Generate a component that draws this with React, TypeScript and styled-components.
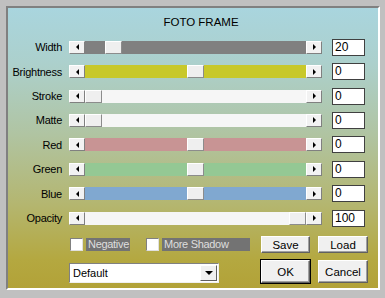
import React, { FC } from 'react';
import styled, { createGlobalStyle } from 'styled-components';

const GlobalStyle = createGlobalStyle`
  html, body {
    margin: 0;
    padding: 0;
    background: #c0c0c0;
  }
  body {
    font-family: 'Liberation Sans', Arial, sans-serif;
    font-size: 11px;
    color: #000;
  }
`;

interface ISlider {
  label: string;
  value: string;
  pos: number;
  track: string;
}

const sliders: ISlider[] = [
  { label: 'Width', value: '20', pos: 0.1, track: '#808080' },
  { label: 'Brightness', value: '0', pos: 0.5, track: '#c8c82a' },
  { label: 'Stroke', value: '0', pos: 0, track: '#f6f6f6' },
  { label: 'Matte', value: '0', pos: 0, track: '#f6f6f6' },
  { label: 'Red', value: '0', pos: 0.5, track: '#c89494' },
  { label: 'Green', value: '0', pos: 0.5, track: '#94c894' },
  { label: 'Blue', value: '0', pos: 0.5, track: '#80a8d0' },
  { label: 'Opacity', value: '100', pos: 1, track: '#f6f6f6' }
];

const Frame = styled.div`
  width: 385px;
  height: 298px;
  box-sizing: border-box;
  padding: 6px 5px 8px 6px;
  background: #c0c0c0;
`;

const Panel = styled.div`
  height: 100%;
  box-sizing: border-box;
  border-top: 2px solid #808080;
  border-left: 2px solid #808080;
  border-right: 2px solid #ffffff;
  border-bottom: 2px solid #ffffff;
  background: linear-gradient(to bottom, #a9d5de 0%, #acd0cc 20%, #b0c4a2 45%, #b4b670 70%, #b4a840 90%, #b2a238 100%);
  display: flex;
  flex-direction: column;
`;

const Title = styled.div`
  padding: 7px 0 0 16px;
  height: 14px;
  line-height: 14px;
  text-align: center;
  font-size: 11.5px;
  margin-bottom: 6px;
`;

const Rows = styled.div`
  display: flex;
  flex-direction: column;
`;

const Row = styled.div`
  display: grid;
  grid-template-columns: 54px 253px 36px;
  column-gap: 7px;
  height: 24.43px;
  align-items: center;
  & > :nth-child(3) {
    margin-left: 3px;
  }
`;

const Label = styled.div`
  text-align: right;
  white-space: nowrap;
  letter-spacing: -0.25px;
`;

const Scroll = styled.div`
  display: flex;
  height: 13px;
`;

const Arrow = styled.div<{ $dir: 'left' | 'right' }>`
  width: 16px;
  height: 13px;
  box-sizing: border-box;
  background: #f2f2f2;
  border-top: 1px solid #ffffff;
  border-left: 1px solid #ffffff;
  border-right: 1px solid #808080;
  border-bottom: 1px solid #808080;
  display: flex;
  align-items: center;
  justify-content: center;
  &::after {
    content: '';
    width: 0;
    height: 0;
    border-top: 3px solid transparent;
    border-bottom: 3px solid transparent;
    ${(p) =>
      p.$dir === 'left' ? 'border-right: 3px solid #000;' : 'border-left: 3px solid #000;'}
  }
`;

const Track = styled.div<{ $color: string }>`
  flex: 1;
  position: relative;
  background: ${(p) => p.$color};
`;

const Thumb = styled.div`
  position: absolute;
  top: 0;
  width: 17px;
  height: 13px;
  box-sizing: border-box;
  background: #efefef;
  border-top: 1px solid #ffffff;
  border-left: 1px solid #ffffff;
  border-right: 1px solid #8c8c8c;
  border-bottom: 1px solid #8c8c8c;
`;

const ValueBox = styled.div`
  height: 17px;
  box-sizing: border-box;
  background: #fff;
  border: 1px solid #404040;
  padding-left: 2px;
  line-height: 15px;
  font-size: 12px;
`;

const Bottom = styled.div`
  display: grid;
  grid-template-columns: 184px 49px 50px;
  grid-template-rows: 17px 23px;
  column-gap: 8px;
  row-gap: 7px;
  padding: 6px 0 0 61px;
  align-items: start;
`;

const Checks = styled.div`
  display: flex;
  align-items: center;
  height: 14px;
  margin-top: 1px;
  padding-left: 1px;
  white-space: nowrap;
`;

const Box = styled.div`
  width: 13px;
  height: 13px;
  box-sizing: border-box;
  background: #fff;
  border-top: 1px solid #808080;
  border-left: 1px solid #808080;
  border-right: 1px solid #e0e0e0;
  border-bottom: 1px solid #e0e0e0;
  flex-shrink: 0;
`;

const CheckText = styled.span<{ $width: number }>`
  display: inline-block;
  flex-shrink: 0;
  box-sizing: border-box;
  min-width: ${(p) => p.$width}px;
  height: 13px;
  line-height: 13px;
  background: #737373;
  color: #dedede;
  padding: 0 1px 0 2px;
  margin-left: 3px;
  margin-right: 16px;
  letter-spacing: -0.3px;
  white-space: nowrap;
`;

const Button = styled.div<{ $default?: boolean }>`
  box-sizing: border-box;
  height: 100%;
  background: #f0f0f0;
  border-top: 1px solid #ffffff;
  border-left: 1px solid #ffffff;
  border-right: 1px solid #606060;
  border-bottom: 1px solid #606060;
  box-shadow: ${(p) =>
    p.$default ? '0 0 0 1px #000, inset -1px -1px 0 #a0a0a0' : 'inset -1px -1px 0 #a0a0a0'};
  display: flex;
  align-items: center;
  justify-content: center;
  font-size: 11.5px;
`;

const Select = styled.div`
  margin-top: 3px;
  width: 150px;
  height: 20px;
  box-sizing: border-box;
  background: #fff;
  border-top: 1px solid #808080;
  border-left: 1px solid #808080;
  border-right: 1px solid #f0f0f0;
  border-bottom: 1px solid #f0f0f0;
  display: flex;
  align-items: center;
`;

const SelectText = styled.span`
  flex: 1;
  padding-left: 3px;
`;

const SelectArrow = styled.div`
  width: 17px;
  height: 16px;
  margin-right: 1px;
  box-sizing: border-box;
  background: #f0f0f0;
  border-top: 1px solid #ffffff;
  border-left: 1px solid #ffffff;
  border-right: 1px solid #606060;
  border-bottom: 1px solid #606060;
  display: flex;
  align-items: center;
  justify-content: center;
  &::after {
    content: '';
    border-left: 4px solid transparent;
    border-right: 4px solid transparent;
    border-top: 4px solid #000;
  }
`;

const SliderRow: FC<ISlider> = (props: ISlider) => {
  return (
    <Row>
      <Label>{props.label}</Label>
      <Scroll>
        <Arrow $dir="left" />
        <Track $color={props.track}>
          <Thumb style={{ left: `calc((100% - 17px) * ${props.pos})` }} />
        </Track>
        <Arrow $dir="right" />
      </Scroll>
      <ValueBox>{props.value}</ValueBox>
    </Row>
  );
};

const App: FC = () => {
  return (
    <>
      <GlobalStyle />
      <Frame>
        <Panel>
          <Title>FOTO FRAME</Title>
          <Rows>
            {sliders.map((s) => (
              <SliderRow key={s.label} {...s} />
            ))}
          </Rows>
          <Bottom>
            <Checks>
              <Box />
              <CheckText $width={43}>Negative</CheckText>
              <Box />
              <CheckText $width={88}>More Shadow</CheckText>
            </Checks>
            <Button>Save</Button>
            <Button>Load</Button>
            <Select>
              <SelectText>Default</SelectText>
              <SelectArrow />
            </Select>
            <Button $default>OK</Button>
            <Button>Cancel</Button>
          </Bottom>
        </Panel>
      </Frame>
    </>
  );
};

export default App;
